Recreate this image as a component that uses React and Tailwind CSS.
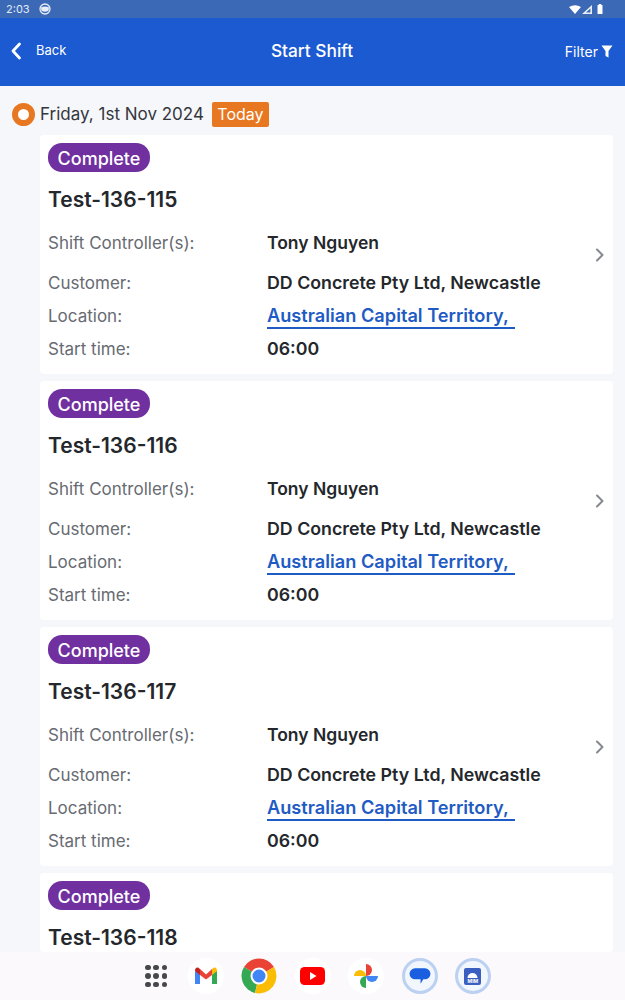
import React from 'react';

const shifts = ['Test-136-115', 'Test-136-116', 'Test-136-117'];

const StatusBar = () => (
    <div className="h-[18px] bg-[#3b69b5] flex items-center justify-between pl-[6px] pr-[22px] text-white shrink-0">
        <div className="flex items-center gap-[9px]">
            <span className="text-[11px] leading-none text-[#e3e9f5]">2:03</span>
            <svg width="12" height="12" viewBox="0 0 12 12">
                <circle cx="6" cy="6" r="5" fill="none" stroke="#e8edf7" strokeWidth="1.3" />
                <path d="M2 4.6 Q6 2.6 10 4.6 L9.6 7.4 Q6 10 2.4 7.4 Z" fill="#e8edf7" />
            </svg>
        </div>
        <div className="flex items-center">
            <svg width="12" height="9" viewBox="0 0 12 9"><path d="M0 2 Q6 -1.4 12 2 L6 9 Z" fill="#fff" /></svg>
            <svg width="10" height="9" viewBox="0 0 10 9" className="ml-[1px]"><path d="M10 0 V9 H0 Z M8.4 3.4 L4 7.6 H8.4 Z" fill="#e8edf7" fillRule="evenodd" /></svg>
            <svg width="6" height="10" viewBox="0 0 6 10" className="ml-[5px]"><path d="M1.8 0 H4.2 V1 H5 Q5.5 1 5.5 1.5 V9.4 Q5.5 10 5 10 H1 Q0.5 10 0.5 9.4 V1.5 Q0.5 1 1 1 H1.8 Z" fill="#fff" /></svg>
        </div>
    </div>
);

const Header = () => (
    <div className="h-[68px] bg-[#1b5ad1] flex items-center justify-between pl-[10px] pr-[12px] pb-[2px] text-white shrink-0">
        <div className="flex items-center gap-[14px] w-[100px]">
            <svg width="12" height="18" viewBox="0 0 12 18" fill="none">
                <path d="M9.5 2 L3 9 L9.5 16" stroke="#fff" strokeWidth="2.8" strokeLinecap="round" strokeLinejoin="round" />
            </svg>
            <span className="text-[13px]">Back</span>
        </div>
        <span className="text-[17.3px] font-medium pl-[1px]">Start Shift</span>
        <div className="flex items-center justify-end gap-[3px] w-[100px]">
            <span className="text-[14px]">Filter</span>
            <svg width="12" height="13" viewBox="0 0 12 13"><path d="M0.5 0.5 H11.5 L7.5 6 V12.5 L4.5 11 V6 Z" fill="#fff" /></svg>
        </div>
    </div>
);

const Row = ({ label, children, className }) => (
    <div className={`flex items-center ${className}`}>
        <span className="w-[219px] text-[17px] text-[#676b72] shrink-0 pt-[2px]">{label}</span>
        {children}
    </div>
);

const CardHead = ({ name }) => (
    <>
        <span className="inline-flex items-center w-[102px] justify-center h-[29px] pt-[1px] rounded-[14px] bg-[#7030a0] text-white text-[18px] font-medium">Complete</span>
        <div className="mt-[14px] text-[21px] leading-[28px] font-semibold text-[#24272b]">{name}</div>
    </>
);

const ShiftCard = ({ name }) => (
    <div className="bg-white rounded-[4px] ml-[40px] mr-[12px] h-[239px] shrink-0 flex items-center pl-[8px] pr-[8px]">
        <div className="flex-1 self-start pt-[8px]">
            <CardHead name={name} />
            <div className="mt-[17px]">
                <Row label="Shift Controller(s):" className="h-[24px]">
                    <span className="text-[17.5px] font-semibold text-[#24272b]">Tony Nguyen</span>
                </Row>
                <Row label="Customer:" className="h-[24px] mt-[16px]">
                    <span className="text-[17.8px] font-semibold text-[#24272b]">DD Concrete Pty Ltd, Newcastle</span>
                </Row>
                <Row label="Location:" className="h-[24px] mt-[9px]">
                    <span className="text-[18.2px] font-semibold text-[#1f5bc4] border-b-2 border-[#1f5bc4] leading-[23px] pr-[6px]">Australian Capital Territory,</span>
                </Row>
                <Row label="Start time:" className="h-[24px] mt-[9px]">
                    <span className="text-[17.8px] font-semibold text-[#24272b]">06:00</span>
                </Row>
            </div>
        </div>
        <svg width="10" height="14" viewBox="0 0 10 14" fill="none">
            <path d="M2 1.5 L7.5 7 L2 12.5" stroke="#85888d" strokeWidth="2" strokeLinecap="round" strokeLinejoin="round" />
        </svg>
    </div>
);

const AppIcon = ({ children, className }) => (
    <div className={`w-[36px] h-[36px] rounded-full flex items-center justify-center ${className}`}>{children}</div>
);

const Dock = () => (
    <div className="h-[48px] bg-[#fbf9fc] flex items-center shrink-0 pl-[145px] gap-[17.4px]">
        <div className="grid grid-cols-3 gap-[3px] w-[22px] mr-[3.6px]">
            {Array.from({ length: 9 }).map((_, i) => (
                <div key={i} className="w-[5.5px] h-[5.5px] rounded-full bg-[#47484c]" />
            ))}
        </div>
        <AppIcon className="bg-white">
            <svg width="24" height="18" viewBox="0 0 24 18">
                <path d="M1 4 V17 H6 V6 Z" fill="#4285f4" />
                <path d="M18 6 V17 H23 V4 Z" fill="#34a853" />
                <path d="M6 2 L12 7.5 L18 2 V8 L12 12.5 L6 8 Z" fill="#ea4335" />
                <path d="M1 4 Q1 0 4 0.5 L6 2 V8 Z" fill="#c5221f" />
                <path d="M18 2 L20 0.5 Q23 0 23 4 L18 8 Z" fill="#fbbc04" />
            </svg>
        </AppIcon>
        <svg width="36" height="36" viewBox="0 0 36 36">
            <path d="M18 18 L3 9 A17.5 17.5 0 0 1 33 9 Z" fill="#ea4335" />
            <path d="M18 18 L3 9 A17.5 17.5 0 0 0 14 35 Z" fill="#34a853" />
            <path d="M18 18 L33 9 A17.5 17.5 0 0 1 14 35 Z" fill="#fbbc04" />
            <circle cx="18" cy="18" r="8.5" fill="#fff" />
            <circle cx="18" cy="18" r="6.5" fill="#4285f4" />
        </svg>
        <AppIcon className="bg-white">
            <svg width="25" height="18" viewBox="0 0 25 18">
                <rect x="0" y="0" width="25" height="18" rx="4.5" fill="#f00" />
                <path d="M10 5 L16.5 9 L10 13 Z" fill="#fff" />
            </svg>
        </AppIcon>
        <AppIcon className="bg-white">
            <svg width="26" height="26" viewBox="0 0 26 26">
                <path d="M1 13 A6 6 0 0 1 13 13 Z" fill="#fbbc04" />
                <path d="M13 1 A6 6 0 0 1 13 13 Z" fill="#ea4335" />
                <path d="M13 13 H25 A6 6 0 0 1 13 13 Z" fill="#4285f4" />
                <path d="M13 13 V25 A6 6 0 0 1 13 13 Z" fill="#34a853" />
            </svg>
        </AppIcon>
        <AppIcon className="bg-[#f2f6fd] border-[3px] border-[#bcd0f2]">
            <svg width="22" height="22" viewBox="0 0 20 20">
                <path d="M5.5 3 H14.5 A5 5 0 0 1 14.5 13 H13 L10.5 17 V13 H5.5 A5 5 0 0 1 5.5 3 Z" fill="#1a5fe0" />
            </svg>
        </AppIcon>
        <AppIcon className="bg-[#f2f6fd] border-[3px] border-[#bcd0f2]">
            <div className="w-[17px] h-[17px] bg-[#3a5fc0] rounded-[2px] flex flex-col items-center justify-end pb-[1px] overflow-hidden">
                <svg width="11" height="7" viewBox="0 0 11 7"><path d="M0.5 7 A5 5 0 0 1 10.5 7 Z" fill="#fff" /></svg>
                <span className="text-[5px] leading-[6px] font-bold text-white">MIM</span>
            </div>
        </AppIcon>
    </div>
);

const App = () => {
    return (
        <div className="h-screen flex flex-col overflow-hidden bg-[#f6f7fb] font-['Inter',sans-serif]">
            <StatusBar />
            <Header />
            <div className="flex-1 overflow-hidden flex flex-col gap-[7px]">
                <div className="flex items-center pl-[12px] pt-[7px] h-[49px] shrink-0 mb-[-7px]">
                    <div className="w-[23px] h-[23px] rounded-full border-[6px] border-[#e87722] bg-white" />
                    <span className="ml-[5px] pt-[2px] text-[#33363b] text-[17px]">Friday, 1st Nov 2024</span>
                    <span className="ml-[8px] w-[57px] h-[25px] bg-[#e87722] rounded-[2px] text-white text-[16px] flex items-center justify-center">Today</span>
                </div>
                {shifts.map(name => <ShiftCard key={name} name={name} />)}
                {/* last card runs under the dock, only its top is on screen */}
                <div className="bg-white rounded-[4px] ml-[40px] mr-[12px] flex-1 pl-[8px] pt-[8px]">
                    <CardHead name="Test-136-118" />
                </div>
            </div>
            <Dock />
        </div>
    );
};

export default App;
